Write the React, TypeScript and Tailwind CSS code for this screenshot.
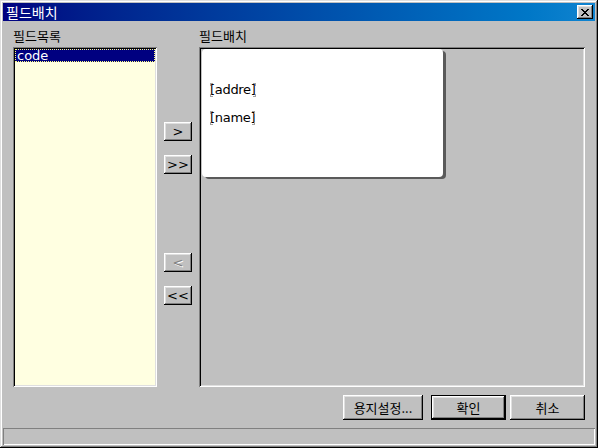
import React from 'react'

const raised =
  'bg-[#c0c0c0] shadow-[inset_-1px_-1px_#000,inset_1px_1px_#fff,inset_-2px_-2px_#808080,inset_2px_2px_#dfdfdf]'
const sunken =
  'shadow-[inset_1px_1px_#808080,inset_-1px_-1px_#fff,inset_2px_2px_#000,inset_-2px_-2px_#dfdfdf]'

function WinButton({ children, className = '', disabled = false }: { children: React.ReactNode; className?: string; disabled?: boolean }) {
  return (
    <button
      className={`${raised} flex items-center justify-center leading-none ${
        disabled ? 'text-[#808080] [text-shadow:1px_1px_#fff]' : 'text-black'
      } ${className}`}
    >
      {children}
    </button>
  )
}

function Field({ label }: { label: string }) {
  return (
    <div className="relative self-start h-[14px] text-[13px] leading-[14px] text-black font-['DejaVu_Sans'] tracking-[-0.3px]">
      {label}
      {/* corner handles */}
      <span className="absolute left-0 top-0 h-[3px] w-[3px] border-l border-t border-[#a0a0a0]" />
      <span className="absolute left-0 bottom-0 h-[3px] w-[3px] border-l border-b border-[#a0a0a0]" />
      <span className="absolute right-0 top-0 h-[3px] w-[3px] border-r border-t border-[#a0a0a0]" />
      <span className="absolute right-0 bottom-0 h-[3px] w-[3px] border-r border-b border-[#a0a0a0]" />
    </div>
  )
}

export default function App() {
  return (
    <div
      className="w-[598px] h-[448px] bg-[#c0c0c0] p-[3px] flex flex-col shadow-[inset_-1px_-1px_#000,inset_1px_1px_#dfdfdf,inset_-2px_-2px_#808080,inset_2px_2px_#fff]"
      style={{ fontFamily: '"Noto Sans CJK KR", "DejaVu Sans", sans-serif' }}
    >
      {/* Title bar */}
      <div className="h-[18px] flex items-center justify-between bg-gradient-to-r from-[#000080] to-[#1084d0] pl-[3px] pr-[2px]">
        <span className="text-white text-[14px] leading-none">필드배치</span>
        <button className={`${raised} w-[16px] h-[14px] flex items-center justify-center`}>
          <svg width="8" height="7" viewBox="0 0 8 7" shapeRendering="crispEdges">
            <path
              d="M0 0h2v1h1v1h2V1h1V0h2v1H7v1H6v1H5v1h1v1h1v1h1v1H6V6H5V5H3v1H2v1H0V6h1V5h1V4h1V3H2V2H1V1H0z"
              fill="#000"
            />
          </svg>
        </button>
      </div>

      {/* Content */}
      <div className="flex-1 flex flex-col px-[10px] pt-[8px]">
        <div className="flex">
          {/* Field list */}
          <div className="w-[144px] flex flex-col">
            <div className="h-[18px] text-[13px] leading-[14px] text-black">필드목록</div>
            <div className={`${sunken} h-[340px] bg-[#ffffe1] p-[2px]`}>
              <div className="h-[13px] bg-[#000080] outline outline-1 outline-dotted outline-[#ffff80] -outline-offset-1 text-white text-[13px] leading-[13px] pl-[2px] font-['DejaVu_Sans']">
                code
              </div>
            </div>
          </div>

          {/* Move buttons */}
          <div className="w-[28px] mx-[7px] flex flex-col pt-[93px] text-[13px] font-['DejaVu_Sans']">
            <WinButton className="h-[19px]">&gt;</WinButton>
            <WinButton className="h-[19px] mt-[14px]">&gt;&gt;</WinButton>
            <WinButton className="h-[19px] mt-[79px]" disabled>
              &lt;
            </WinButton>
            <WinButton className="h-[19px] mt-[14px]">&lt;&lt;</WinButton>
          </div>

          {/* Layout canvas */}
          <div className="flex-1 flex flex-col">
            <div className="h-[18px] text-[13px] leading-[14px] text-black">필드배치</div>
            <div className={`${sunken} h-[340px] bg-[#c0c0c0] pt-[2px] pl-[3px]`}>
              <div className="w-[241px] h-[128px] bg-white rounded-[4px] shadow-[3px_2px_0_#5a5a5a] flex flex-col gap-[14px] pt-[34px] pl-[8px]">
                <Field label="[addre]" />
                <Field label="[name]" />
              </div>
            </div>
          </div>
        </div>

        {/* Dialog buttons */}
        <div className="flex justify-end mt-[8px] text-[13px]">
          <WinButton className="w-[80px] h-[25px]">용지설정...</WinButton>
          <div className="ml-[8px] border border-black">
            <WinButton className="w-[73px] h-[23px]">확인</WinButton>
          </div>
          <WinButton className="w-[75px] h-[25px] ml-[4px]">취소</WinButton>
        </div>
      </div>

      {/* Status bar */}
      <div className="h-[17px] shadow-[inset_1px_1px_#808080,inset_-1px_-1px_#fff]" />
    </div>
  )
}
